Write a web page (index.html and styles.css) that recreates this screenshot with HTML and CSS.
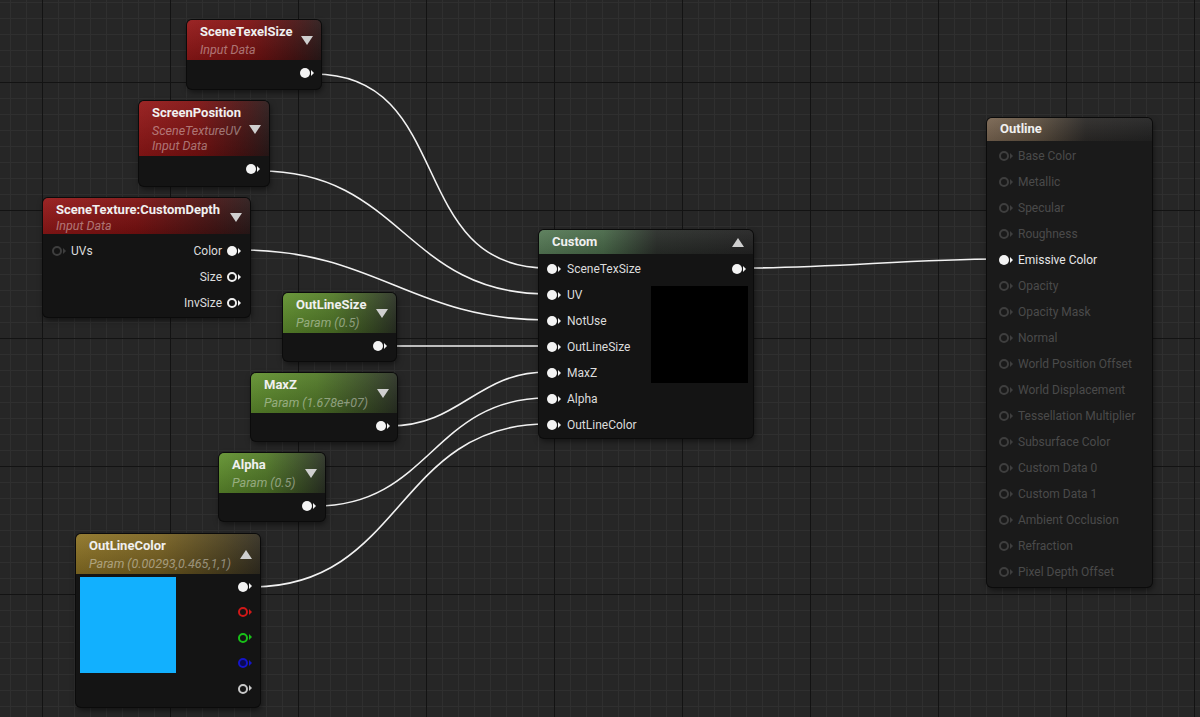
FILE: index.html
```html
<!DOCTYPE html>
<html>
<head>
<meta charset="utf-8">
<link rel="stylesheet" href="styles.css">
</head>
<body>
<div class="graph">
  <svg class="wires" width="1200" height="717" viewBox="0 0 1200 717">
    <g fill="none" stroke="#f2f2f2" stroke-width="1.6">
      <path d="M314 74 C456 74 405 268 547 268"/>
      <path d="M260 171 C402 171 405 294 547 294"/>
      <path d="M241 250 C376 250 412 320 547 320"/>
      <path d="M387 346 C440 346 494 346 547 346"/>
      <path d="M390 426 C460 426 477 372 547 372"/>
      <path d="M316 506 C430 506 433 398 547 398"/>
      <path d="M252 587 C404 587 395 424 547 424"/>
      <path d="M746 268 C834 268 911 259 999 259"/>
    </g>
  </svg>

  <div class="node n-texel">
    <div class="hdr red">
      <div class="htext"><div class="title">SceneTexelSize</div><div class="sub">Input Data</div></div>
      <span class="arrow down"></span>
    </div>
    <div class="body out-only"><div class="row right"><span class="pin fill"></span></div></div>
  </div>

  <div class="node n-screen">
    <div class="hdr red">
      <div class="htext"><div class="title">ScreenPosition</div><div class="sub">SceneTextureUV</div><div class="sub next">Input Data</div></div>
      <span class="arrow down"></span>
    </div>
    <div class="body out-only"><div class="row right"><span class="pin fill"></span></div></div>
  </div>

  <div class="node n-scenetex">
    <div class="hdr red short">
      <div class="htext"><div class="title">SceneTexture:CustomDepth</div><div class="sub">Input Data</div></div>
      <span class="arrow down"></span>
    </div>
    <div class="body st-body">
      <div class="row split"><span class="in"><span class="pin ring dim"></span><span class="lbl">UVs</span></span><span class="out"><span class="lbl">Color</span><span class="pin fill"></span></span></div>
      <div class="row split"><span></span><span class="out"><span class="lbl">Size</span><span class="pin ring"></span></span></div>
      <div class="row split"><span></span><span class="out"><span class="lbl">InvSize</span><span class="pin ring"></span></span></div>
    </div>
  </div>

  <div class="node n-olsize">
    <div class="hdr green">
      <div class="htext"><div class="title">OutLineSize</div><div class="sub">Param (0.5)</div></div>
      <span class="arrow down"></span>
    </div>
    <div class="body out-only"><div class="row right"><span class="pin fill"></span></div></div>
  </div>

  <div class="node n-maxz">
    <div class="hdr green">
      <div class="htext"><div class="title">MaxZ</div><div class="sub">Param (1.678e+07)</div></div>
      <span class="arrow down"></span>
    </div>
    <div class="body out-only"><div class="row right"><span class="pin fill"></span></div></div>
  </div>

  <div class="node n-alpha">
    <div class="hdr green">
      <div class="htext"><div class="title">Alpha</div><div class="sub">Param (0.5)</div></div>
      <span class="arrow down"></span>
    </div>
    <div class="body out-only"><div class="row right"><span class="pin fill"></span></div></div>
  </div>

  <div class="node n-color">
    <div class="hdr gold">
      <div class="htext"><div class="title">OutLineColor</div><div class="sub">Param (0.00293,0.465,1,1)</div></div>
      <span class="arrow up"></span>
    </div>
    <div class="body color-body">
      <div class="swatch"></div>
      <div class="pincol">
        <div class="crow"><span class="pin fill"></span></div>
        <div class="crow"><span class="pin ring r"></span></div>
        <div class="crow"><span class="pin ring g"></span></div>
        <div class="crow"><span class="pin ring b"></span></div>
        <div class="crow"><span class="pin ring a"></span></div>
      </div>
    </div>
  </div>

  <div class="node n-custom">
    <div class="hdr custom">
      <div class="htext"><div class="title">Custom</div></div>
      <span class="arrow up"></span>
    </div>
    <div class="body custom-body">
      <div class="inputs">
        <div class="row"><span class="pin fill"></span><span class="lbl">SceneTexSize</span></div>
        <div class="row"><span class="pin fill"></span><span class="lbl">UV</span></div>
        <div class="row"><span class="pin fill"></span><span class="lbl">NotUse</span></div>
        <div class="row"><span class="pin fill"></span><span class="lbl">OutLineSize</span></div>
        <div class="row"><span class="pin fill"></span><span class="lbl">MaxZ</span></div>
        <div class="row"><span class="pin fill"></span><span class="lbl">Alpha</span></div>
        <div class="row"><span class="pin fill"></span><span class="lbl">OutLineColor</span></div>
      </div>
      <div class="outcol">
        <div class="row right"><span class="pin fill"></span></div>
        <div class="preview"></div>
      </div>
    </div>
  </div>

  <div class="node n-outline">
    <div class="hdr outline">
      <div class="htext"><div class="title">Outline</div></div>
    </div>
    <div class="body outline-body">
      <div class="row off"><span class="pin ring dim"></span><span class="lbl">Base Color</span></div>
      <div class="row off"><span class="pin ring dim"></span><span class="lbl">Metallic</span></div>
      <div class="row off"><span class="pin ring dim"></span><span class="lbl">Specular</span></div>
      <div class="row off"><span class="pin ring dim"></span><span class="lbl">Roughness</span></div>
      <div class="row on"><span class="pin fill"></span><span class="lbl">Emissive Color</span></div>
      <div class="row off"><span class="pin ring dim"></span><span class="lbl">Opacity</span></div>
      <div class="row off"><span class="pin ring dim"></span><span class="lbl">Opacity Mask</span></div>
      <div class="row off"><span class="pin ring dim"></span><span class="lbl">Normal</span></div>
      <div class="row off"><span class="pin ring dim"></span><span class="lbl">World Position Offset</span></div>
      <div class="row off"><span class="pin ring dim"></span><span class="lbl">World Displacement</span></div>
      <div class="row off"><span class="pin ring dim"></span><span class="lbl">Tessellation Multiplier</span></div>
      <div class="row off"><span class="pin ring dim"></span><span class="lbl">Subsurface Color</span></div>
      <div class="row off"><span class="pin ring dim"></span><span class="lbl">Custom Data 0</span></div>
      <div class="row off"><span class="pin ring dim"></span><span class="lbl">Custom Data 1</span></div>
      <div class="row off"><span class="pin ring dim"></span><span class="lbl">Ambient Occlusion</span></div>
      <div class="row off"><span class="pin ring dim"></span><span class="lbl">Refraction</span></div>
      <div class="row off"><span class="pin ring dim"></span><span class="lbl">Pixel Depth Offset</span></div>
    </div>
  </div>
</div>
</body>
</html>
```

FILE: styles.css
```css
*, *::before, *::after { box-sizing: border-box; }
html, body { margin: 0; padding: 0; }
body {
  width: 1200px;
  height: 717px;
  overflow: hidden;
  font-family: Roboto, "Liberation Sans", sans-serif;
  font-size: 12px;
  color: #dcdcdc;
}
.graph {
  position: relative;
  width: 1200px;
  height: 717px;
  background-color: #262626;
  background-image:
    linear-gradient(to right, #131313 0, #131313 1px, transparent 1px),
    linear-gradient(to bottom, #131313 0, #131313 1px, transparent 1px),
    linear-gradient(to right, #2f2f2f 0, #2f2f2f 1px, transparent 1px),
    linear-gradient(to bottom, #2f2f2f 0, #2f2f2f 1px, transparent 1px);
  background-size: 128px 128px, 128px 128px, 16px 16px, 16px 16px;
  background-position: 42px 82px, 42px 82px, 10px 2px, 10px 2px;
}
.wires { position: absolute; left: 0; top: 0; z-index: 1; }

.node {
  position: absolute;
  z-index: 2;
  border-radius: 5px;
  background: #141414;
  overflow: hidden;
  box-shadow: 0 0 0 1px #0b0b0b, 1px 3px 6px rgba(0,0,0,0.55);
  display: flex;
  flex-direction: column;
}
.hdr {
  display: flex;
  align-items: center;
  justify-content: space-between;
  padding: 4px 8px 3px 13px;
}
.title { font-weight: bold; font-size: 13px; color: #f0f0f0; line-height: 16px; white-space: nowrap; }
.sub { font-style: italic; font-size: 12.5px; color: rgba(255,255,255,0.42); line-height: 15px; margin-top: 2px; white-space: nowrap; }
.sub.next { margin-top: 0; }
.red {
  background:
    linear-gradient(to bottom, rgba(255,255,255,0.06), rgba(0,0,0,0.18)),
    linear-gradient(to right, #951818 0%, #7e1111 45%, #4a1414 80%, #2c1a1a 100%);
}
.green {
  background:
    linear-gradient(to bottom, rgba(255,255,255,0.06), rgba(0,0,0,0.2)),
    linear-gradient(to right, #62922f 0%, #527a28 45%, #3a4e26 80%, #2c3326 100%);
}
.gold {
  background:
    linear-gradient(to bottom, rgba(255,255,255,0.06), rgba(0,0,0,0.2)),
    linear-gradient(to right, #8f7526 0%, #7a6322 45%, #4f4320 80%, #342f22 100%);
}
.custom {
  padding: 4px 9px 4px 13px;
  background:
    linear-gradient(to bottom, rgba(255,255,255,0.05), rgba(0,0,0,0.15)),
    linear-gradient(to right, #587c58 0%, #496949 30%, #2a2e2a 55%, #242424 100%);
}
.outline {
  padding: 3px 8px 4px 13px;
  background:
    linear-gradient(to bottom, rgba(255,255,255,0.05), rgba(0,0,0,0.15)),
    linear-gradient(to right, #7a6652 0%, #5f5141 30%, #2c2a28 60%, #242424 100%);
}

.arrow { width: 0; height: 0; border-left: 6px solid transparent; border-right: 6px solid transparent; box-sizing: content-box; }
.arrow.down { border-top: 9px solid #cfcfcf; }
.arrow.up { border-bottom: 9px solid #cfcfcf; }

.body { flex: 1; }
.row {
  height: 26px;
  display: flex;
  align-items: center;
  gap: 6px;
  white-space: nowrap;
}
.row.right { justify-content: flex-end; }
.out-only { padding: 0 7px 0 0; }

.pin { position: relative; width: 14px; height: 10px; flex: none; }
.pin::before {
  content: "";
  position: absolute;
  left: 0; top: 0;
  width: 10px; height: 10px;
  border-radius: 50%;
}
.pin::after {
  content: "";
  position: absolute;
  left: 10.5px; top: 1.5px;
  width: 0; height: 0;
  box-sizing: content-box;
  border-top: 3.5px solid transparent;
  border-bottom: 3.5px solid transparent;
  border-left: 3.5px solid #f4f4f4;
}
.pin.fill::before { background: #f4f4f4; }
.pin.ring::before { border: 2px solid #f0f0f0; }
.pin.ring.dim::before { border-color: #3e3e3e; }
.pin.ring.dim::after { border-left-color: #3e3e3e; }
.pin.ring.r::before { border-color: #d01818; }
.pin.ring.r::after { border-left-color: #d01818; }
.pin.ring.g::before { border-color: #18c018; }
.pin.ring.g::after { border-left-color: #18c018; }
.pin.ring.b::before { border-color: #1515c8; background: #0a0a50; }
.pin.ring.b::after { border-left-color: #1515c8; }
.pin.ring.a::before { border-color: #c8c8c8; }
.pin.ring.a::after { border-left-color: #c8c8c8; }

.lbl { color: #dcdcdc; }

/* node placements on the graph canvas */
.n-texel { left: 187px; top: 20px; width: 134px; height: 69px; }
.n-screen { left: 139px; top: 101px; width: 130px; height: 85px; }
.n-screen .out-only { padding-right: 9px; }
.n-scenetex { left: 43px; top: 198px; width: 207px; height: 119px; }
.n-olsize { left: 283px; top: 293px; width: 113px; height: 68px; }
.n-olsize .out-only { padding-right: 9px; }
.n-maxz { left: 251px; top: 373px; width: 146px; height: 68px; }
.n-alpha { left: 219px; top: 453px; width: 106px; height: 68px; }
.n-alpha .out-only { padding-right: 9px; }
.n-color { left: 76px; top: 534px; width: 184px; height: 173px; }
.n-custom { left: 539px; top: 230px; width: 214px; height: 208px; }
.n-outline { left: 987px; top: 118px; width: 165px; height: 469px; background: #1a1a1a; }

.hdr.short { padding-top: 4px; padding-bottom: 1px; }
.hdr.short .sub { margin-top: 0; }
.st-body { padding: 4px 9px 0 9px; }
.row.split { justify-content: space-between; }
.row.split .in, .row.split .out { display: flex; align-items: center; gap: 5px; }

.color-body { display: flex; justify-content: space-between; padding: 0 8px 0 4px; }
.swatch { width: 96px; height: 96px; margin-top: 3px; background: #12b0fe; }
.pincol { display: flex; flex-direction: column; }
.crow { height: 25.5px; display: flex; align-items: center; }

.custom-body { display: flex; justify-content: space-between; padding: 2px 5px 0 8px; }
.outcol { display: flex; flex-direction: column; align-items: flex-end; }
.outcol .row { padding-right: 2px; }
.preview { width: 97px; height: 97px; margin-top: 4px; background: #000; }

.outline-body { padding: 2px 0 0 12px; }
.outline-body .row { gap: 5px; }
.outline-body .row.on .lbl { color: #e6e6e6; }
.outline-body .row.off .lbl { color: #4a4a4a; }
```
